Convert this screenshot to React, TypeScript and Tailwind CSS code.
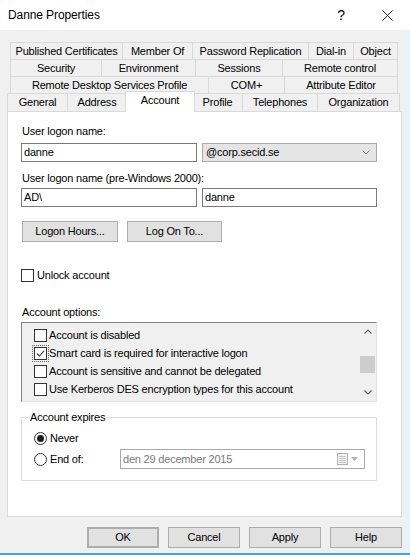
import React from "react";

const FONT = "font-['Liberation_Sans',Arial,sans-serif]";

function Tab({ className, children }: { className: string; children: React.ReactNode }) {
  return (
    <div
      className={
        "h-full shrink-0 border-t border-r border-[#d9d9d9] bg-[#f0f0f0] flex items-center justify-center whitespace-nowrap " +
        className
      }
    >
      {children}
    </div>
  );
}

function Check({ checked, focus }: { checked?: boolean; focus?: boolean }) {
  return (
    <span
      className={
        "w-[13px] h-[13px] border border-[#333] bg-white flex items-center justify-center shrink-0 " +
        (focus ? "outline outline-1 outline-dotted outline-[#666] outline-offset-[1px]" : "")
      }
    >
      {checked && (
        <svg width="9" height="9" viewBox="0 0 9 9">
          <path d="M1 4.6 L3.4 7 L8 1.8" stroke="#333" fill="none" strokeWidth="1.1" />
        </svg>
      )}
    </span>
  );
}

function Radio({ on }: { on?: boolean }) {
  return (
    <span className="w-[13px] h-[13px] rounded-full border border-[#333] bg-white flex items-center justify-center shrink-0">
      {on && <span className="w-[7px] h-[7px] rounded-full bg-[#1a1a1a]" />}
    </span>
  );
}

function Btn({ className, children }: { className: string; children: React.ReactNode }) {
  return (
    <div
      className={
        "h-[21px] bg-[#e1e1e1] border border-[#adadad] flex items-center justify-center shrink-0 " + className
      }
    >
      {children}
    </div>
  );
}

function Chevron({ up }: { up?: boolean }) {
  return (
    <svg width="8" height="5" viewBox="0 0 8 5">
      <path
        d={up ? "M0.5 4.5 L4 1 L7.5 4.5" : "M0.5 0.5 L4 4 L7.5 0.5"}
        stroke="#606060"
        strokeWidth="1.1"
        fill="none"
      />
    </svg>
  );
}

export default function App() {
  return (
    <div
      className={
        "w-[410px] h-[558px] bg-[#e6f3f9] overflow-hidden text-[11px] tracking-[-0.2px] text-black leading-[15px] " +
        FONT
      }
    >
      {/* Title bar */}
      <div className="h-[30px] bg-white flex items-center">
        <div className="pl-[8px] text-[12px] tracking-[-0.1px]">Danne Properties</div>
        <div className="ml-auto flex h-full">
          <div className="w-[46px] h-full flex items-center justify-center text-[14px]">?</div>
          <div className="w-[46px] h-full flex items-center justify-center">
            <svg width="11" height="11" viewBox="0 0 11 11">
              <path d="M0.5 0.5 L10.5 10.5 M10.5 0.5 L0.5 10.5" stroke="#222" strokeWidth="1" />
            </svg>
          </div>
        </div>
      </div>

      {/* Body */}
      <div className="w-[404px] h-[523px] bg-[#f0f0f0] pt-[12px]">
        {/* Tab rows */}
        <div className="h-[17px] flex ml-[10px]">
          <Tab className="w-[113px] border-l">Published Certificates</Tab>
          <Tab className="w-[70px]">Member Of</Tab>
          <Tab className="w-[116px]">Password Replication</Tab>
          <Tab className="w-[45px]">Dial-in</Tab>
          <Tab className="w-[44px]">Object</Tab>
        </div>
        <div className="h-[17px] flex ml-[10px]">
          <Tab className="w-[92px] border-l">Security</Tab>
          <Tab className="w-[94px]">Environment</Tab>
          <Tab className="w-[87px]">Sessions</Tab>
          <Tab className="w-[115px]">Remote control</Tab>
        </div>
        <div className="h-[17px] flex ml-[10px]">
          <Tab className="w-[199px] border-l">Remote Desktop Services Profile</Tab>
          <Tab className="w-[76px]">COM+</Tab>
          <Tab className="w-[113px]">Attribute Editor</Tab>
        </div>
        <div className="h-[18px] flex ml-[7px]">
          <Tab className="w-[61px] border-l">General</Tab>
          <Tab className="w-[59px]">Address</Tab>
          <div className="relative z-10 -mt-[2px] h-[21px] w-[70px] -ml-[2px] -mr-[2px] shrink-0 bg-white border-t border-l border-r border-[#d9d9d9] flex justify-center pt-[1px]">
            Account
          </div>
          <Tab className="w-[50px]">Profile</Tab>
          <Tab className="w-[75px]">Telephones</Tab>
          <Tab className="w-[82px]">Organization</Tab>
        </div>

        {/* Panel */}
        <div className="ml-[7px] w-[395px] h-[406px] bg-white border border-[#d9d9d9] pl-[13px]">
          <div className="mt-[12px] pl-[1px]">User logon name:</div>
          <div className="mt-[4px] flex gap-[5px]">
            <div className="w-[176px] h-[19px] border border-[#7a7a7a] bg-white flex items-center pl-[2px]">danne</div>
            <div className="w-[175px] h-[19px] border border-[#acacac] bg-[#e5e5e5] flex items-center pl-[3px]">
              <span>@corp.secid.se</span>
              <span className="ml-auto mr-[6px] flex">
                <svg width="8" height="5" viewBox="0 0 8 5">
                  <path d="M0.5 0.5 L4 4 L7.5 0.5" stroke="#7a7a7a" strokeWidth="1" fill="none" />
                </svg>
              </span>
            </div>
          </div>
          <div className="mt-[9px] pl-[1px]">User logon name (pre-Windows 2000):</div>
          <div className="mt-[2px] flex gap-[5px]">
            <div className="w-[176px] h-[19px] border border-[#7a7a7a] bg-white flex items-center pl-[2px]">AD\</div>
            <div className="w-[175px] h-[19px] border border-[#7a7a7a] bg-white flex items-center pl-[2px]">danne</div>
          </div>
          <div className="mt-[14px] ml-[1px] flex gap-[9px]">
            <Btn className="w-[96px]">Logon Hours...</Btn>
            <Btn className="w-[95px]">Log On To...</Btn>
          </div>
          <div className="mt-[26px] flex items-center gap-[3px] h-[15px]">
            <Check />
            <span>Unlock account</span>
          </div>
          <div className="mt-[22px] pl-[1px]">Account options:</div>

          {/* List box */}
          <div className="mt-[2px] w-[356px] h-[80px] bg-[#f0f0f0] border-t border-l border-[#828282] border-r border-b border-r-[#e3e3e3] border-b-[#e3e3e3] flex">
            <div className="flex-1 pt-[3px]">
              <div className="h-[18px] flex items-center pl-[12px] gap-[2px]">
                <Check />
                <span>Account is disabled</span>
              </div>
              <div className="h-[18px] flex items-center pl-[12px] gap-[2px]">
                <Check checked focus />
                <span>Smart card is required for interactive logon</span>
              </div>
              <div className="h-[18px] flex items-center pl-[12px] gap-[2px]">
                <Check />
                <span>Account is sensitive and cannot be delegated</span>
              </div>
              <div className="h-[18px] flex items-center pl-[12px] gap-[2px]">
                <Check />
                <span>Use Kerberos DES encryption types for this account</span>
              </div>
            </div>
            <div className="w-[17px] h-full flex flex-col bg-[#f0f0f0]">
              <div className="h-[17px] flex items-center justify-center">
                <Chevron up />
              </div>
              <div className="flex-1 pt-[16px]">
                <div className="h-[17px] w-[15px] mx-auto bg-[#cdcdcd]" />
              </div>
              <div className="h-[17px] flex items-center justify-center">
                <Chevron />
              </div>
            </div>
          </div>

          {/* Account expires */}
          <fieldset className="mt-[8px] w-[356px] h-[71px] border border-[#dcdcdc]">
            <legend className="ml-[6px] px-[2px]">Account expires</legend>
            <div className="mt-[6px] h-[15px] pl-[12px] flex items-center gap-[3px]">
              <Radio on />
              <span>Never</span>
            </div>
            <div className="mt-[3px] h-[20px] pl-[12px] flex items-center">
              <Radio />
              <span className="ml-[3px] w-[70px]">End of:</span>
              <div className="w-[245px] h-[20px] border border-[#a8a8a8] bg-white flex items-center pl-[2px] text-[#7a7a7a]">
                <span>den 29 december 2015</span>
                <span className="ml-auto mr-[6px] flex items-center gap-[3px]">
                  <svg width="11" height="12" viewBox="0 0 11 12">
                    <rect x="0.5" y="0.5" width="10" height="11" fill="#f4f4f4" stroke="#b0b0b0" />
                    <path d="M2 3.5 H9 M2 5.5 H9 M2 7.5 H9 M2 9.5 H9" stroke="#c4c4c4" strokeWidth="1" />
                  </svg>
                  <svg width="7" height="4" viewBox="0 0 7 4">
                    <path d="M0 0 L7 0 L3.5 4 Z" fill="#b0b0b0" />
                  </svg>
                </span>
              </div>
            </div>
          </fieldset>
        </div>

        {/* Bottom buttons */}
        <div className="mt-[10px] pl-[87px] flex gap-[9px]">
          <Btn className="w-[72px] border-2 border-[#0078d7]">OK</Btn>
          <Btn className="w-[72px]">Cancel</Btn>
          <Btn className="w-[72px]">Apply</Btn>
          <Btn className="w-[72px]">Help</Btn>
        </div>
      </div>
      <div className="h-[2px] bg-[#4aa3e0]" />
      <div className="h-[3px] bg-white" />
    </div>
  );
}
